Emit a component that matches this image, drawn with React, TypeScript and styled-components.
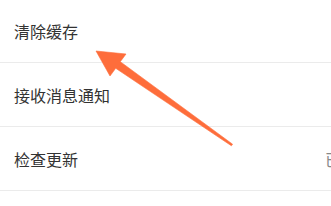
import React from "react";
import styled, { createGlobalStyle } from "styled-components";

const Global = createGlobalStyle`
  html, body {
    margin: 0;
    padding: 0;
    background: #ffffff;
    overflow: hidden;
  }
  body {
    font-family: "Noto Sans CJK SC", "Noto Sans", sans-serif;
  }
`;

const Page = styled.div`
  position: relative;
  width: 435px;
  height: 206px;
  overflow: hidden;
  background: #ffffff;
`;

const List = styled.ul`
  list-style: none;
  margin: -1px 0 0 0;
  padding: 0;
`;

const Row = styled.li`
  display: flex;
  align-items: center;
  justify-content: space-between;
  height: 63px;
  padding: 0 14px;
  border-bottom: 1px solid #ebebeb;
  box-sizing: content-box;
`;

const Label = styled.span`
  font-size: 16px;
  color: #333333;
  line-height: 1;
`;

const Value = styled.span`
  font-size: 16px;
  color: #888888;
  line-height: 1;
`;

const Arrow = styled.svg`
  position: absolute;
  left: 0;
  top: 0;
  pointer-events: none;
`;

const items: { label: string; value?: string }[] = [
  { label: "清除缓存" },
  { label: "接收消息通知" },
  { label: "检查更新", value: "已是最新版本" },
];

export default function App() {
  return (
    <Page>
      <Global />
      <List>
        {items.map((it) => (
          <Row key={it.label}>
            <Label>{it.label}</Label>
            {it.value && <Value>{it.value}</Value>}
          </Row>
        ))}
      </List>
      <Arrow width="331" height="206" viewBox="0 0 331 206">
        <polygon
          points="96,51 126,54 120.3,61.7 232.6,144.2 231.4,145.8 115.7,68.3 110,76"
          fill="#fe6d3b"
          stroke="#fe6d3b"
          strokeWidth="0.6"
          strokeLinejoin="round"
        />
      </Arrow>
    </Page>
  );
}
